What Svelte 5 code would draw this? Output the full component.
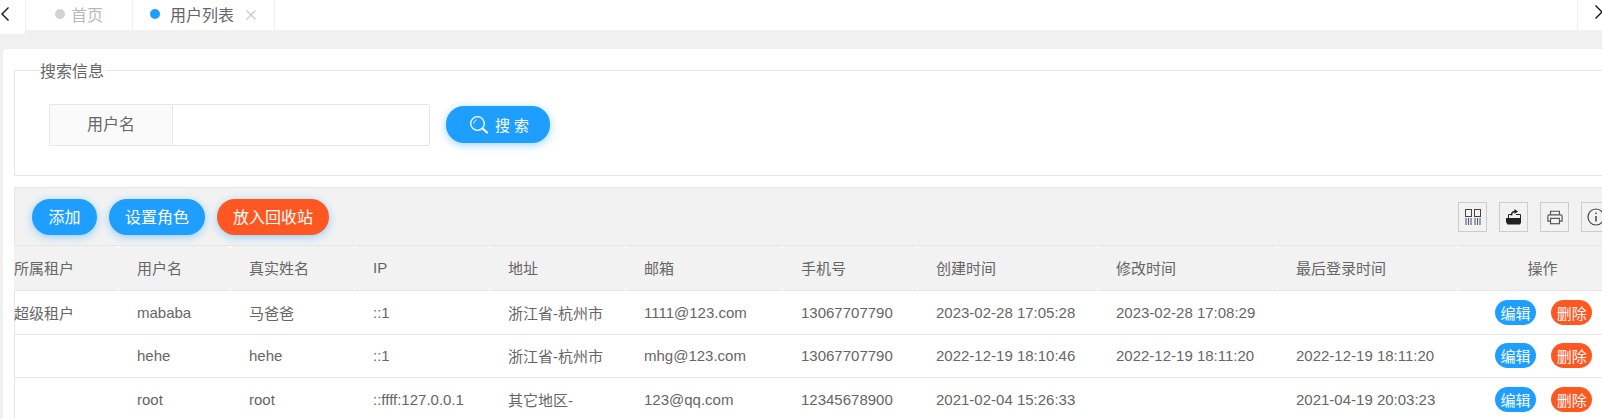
<script>
  const columns = [
    { title: "所属租户", width: 106 },
    { title: "用户名", width: 112 },
    { title: "真实姓名", width: 124 },
    { title: "IP", width: 135 },
    { title: "地址", width: 136 },
    { title: "邮箱", width: 157 },
    { title: "手机号", width: 135 },
    { title: "创建时间", width: 180 },
    { title: "修改时间", width: 180 },
    { title: "最后登录时间", width: 180 },
  ];

  const rows = [
    ["超级租户", "mababa", "马爸爸", "::1", "浙江省-杭州市", "1111@123.com", "13067707790", "2023-02-28 17:05:28", "2023-02-28 17:08:29", ""],
    ["", "hehe", "hehe", "::1", "浙江省-杭州市", "mhg@123.com", "13067707790", "2022-12-19 18:10:46", "2022-12-19 18:11:20", "2022-12-19 18:11:20"],
    ["", "root", "root", "::ffff:127.0.0.1", "其它地区-", "123@qq.com", "12345678900", "2021-02-04 15:26:33", "", "2021-04-19 20:03:23"],
  ];
</script>

<div class="page">
  <div class="tabs">
    <button class="arrow" aria-label="向左">
      <svg width="10" height="16" viewBox="0 0 10 16"><path d="M8.5 1.5 2 8l6.5 6.5" fill="none" stroke="#111" stroke-width="1.4" /></svg>
    </button>
    <div class="tab first"><i class="dot"></i>首页</div>
    <div class="tab second">
      <i class="dot on"></i><span class="cur">用户列表</span>
      <svg class="close" width="10" height="10" viewBox="0 0 10 10"><path d="M.5.5l9 9M9.5.5l-9 9" stroke="#c8c8c8" stroke-width="1.1" /></svg>
    </div>
    <div class="spacer"></div>
    <button class="arrow right" aria-label="向右">
      <svg width="10" height="16" viewBox="0 0 10 16"><path d="M1.5 1.5 8 8l-6.5 6.5" fill="none" stroke="#111" stroke-width="1.4" /></svg>
    </button>
  </div>

  <div class="card">
    <fieldset>
      <legend>搜索信息</legend>
      <div class="search">
        <div class="label">用户名</div>
        <input type="text" />
        <button class="btn big">
          <svg width="20" height="20" viewBox="0 0 20 20" fill="none" stroke="#fff">
            <circle cx="8.5" cy="8.5" r="6.8" stroke-width="1.3" />
            <path d="M5 8.5c0-2 1-3.200 2.500-3.500" stroke-width="1" />
            <path d="M13.500 13.500l4.500 4" stroke-width="2.200" stroke-linecap="round" />
          </svg>
          <span>搜 索</span>
        </button>
      </div>
    </fieldset>

    <div class="panel">
      <div class="toolbar">
        <button class="btn wide">添加</button>
        <button class="btn">设置角色</button>
        <button class="btn danger">放入回收站</button>
        <div class="tools">
          <div class="tool">
            <svg width="16" height="16" viewBox="0 0 16 16" fill="none">
              <rect x=".5" y=".5" width="6" height="7" stroke="#444" />
              <rect x="9.500" y=".5" width="6" height="7" stroke="#444" />
              <path d="M1 9v7M3.500 9v7M6 9v7M10 9v7M12.500 9v7M15 9v7" stroke="#4f6078" stroke-width="1.100" />
            </svg>
          </div>
          <div class="tool">
            <svg width="16" height="16" viewBox="0 0 16 16">
              <path d="M0 9h15v4.500l-1 2H1.500L0 13z" fill="#222" />
              <path d="M2.500 9V5.500H5M10 5.500h4.500V9" fill="none" stroke="#222" />
              <path d="M5.500 6.500c0-2.500 1.500-4 3.500-4" fill="none" stroke="#222" stroke-width="1.500" />
              <path d="M8.500 0l3.500 2.500-3.500 2.500z" fill="#222" />
            </svg>
          </div>
          <div class="tool">
            <svg width="16" height="15" viewBox="0 0 18 16" fill="none" stroke="#555" stroke-width="1.300">
              <path d="M4 5V1h10v4" />
              <path d="M4 12H1V6.500C1 5.500 1.500 5 2.500 5h13c1 0 1.500.5 1.500 1.500V12h-3" />
              <rect x="4" y="9" width="10" height="6" />
            </svg>
          </div>
          <div class="tool">
            <svg width="18" height="18" viewBox="0 0 18 18" fill="none" stroke="#444">
              <circle cx="9" cy="9" r="8" stroke-width="1.200" />
              <path d="M9 8v5.500M9 4.500v1.500" stroke-width="1.500" />
            </svg>
          </div>
        </div>
      </div>

      <table>
        <colgroup>
          {#each columns as c}
            <col style="width: {c.width}px" />
          {/each}
          <col style="width: 143px" />
        </colgroup>
        <thead>
          <tr>
            {#each columns as c}
              <th>{c.title}</th>
            {/each}
            <th class="center">操作</th>
          </tr>
        </thead>
        <tbody>
          {#each rows as row}
            <tr>
              {#each row as cell}
                <td>{cell}</td>
              {/each}
              <td class="ops">
                <button class="mini">编辑</button>
                <button class="mini danger">删除</button>
              </td>
            </tr>
          {/each}
        </tbody>
      </table>
    </div>
  </div>
</div>

<style>
  :global(body) {
    font-family: "Liberation Sans", "Noto Sans CJK SC", sans-serif;
    background: #f0f0f0;
    overflow: hidden;
  }

  .page {
    width: 1602px;
    height: 419px;
    overflow: hidden;
    color: #666;
    font-size: 15px;
  }

  .tabs {
    display: flex;
    height: 30px;
    background: #fff;
  }

  .arrow {
    width: 25px;
    height: 30px;
    padding: 0 0 4px;
    border: none;
    border-right: 1px solid #f0f0f0;
    background: #fff;
    text-align: left;
    box-sizing: content-box;
  }

  .arrow.right {
    border-right: none;
    border-left: 1px solid #f0f0f0;
    padding-left: 16px;
    box-sizing: border-box;
    width: 25px;
  }

  .tab {
    display: flex;
    align-items: center;
    height: 30px;
    box-sizing: border-box;
    border-right: 1px solid #f0f0f0;
    color: #b9b9b9;
    font-size: 16px;
    padding-bottom: 3px;
  }

  .tab.first {
    width: 107px;
    padding-left: 29px;
  }

  .tab.second {
    width: 142px;
    padding-left: 17px;
  }

  .cur {
    color: #666;
  }

  .dot {
    width: 10px;
    height: 10px;
    border-radius: 50%;
    background: #d2d2d2;
    margin-right: 6px;
  }

  .dot.on {
    background: #1e9fff;
    margin-right: 10px;
  }

  .close {
    margin-left: 12px;
    margin-top: 3px;
  }

  .spacer {
    flex: 1;
  }

  .card {
    width: 1700px;
    height: 400px;
    margin: 19px 0 0 3px;
    padding: 21px 0 0 11px;
    box-sizing: border-box;
    background: #fff;
    border-radius: 4px;
  }

  fieldset {
    width: 1650px;
    height: 106px;
    margin: 0;
    padding: 0 0 0 34px;
    box-sizing: border-box;
    border: 1px solid #e6e6e6;
    position: relative;
  }

  legend {
    position: absolute;
    top: -9px;
    left: 25px;
    padding: 0;
    background: #fff;
    color: #666;
    font-size: 16px;
    line-height: 20px;
    padding-right: 2px;
  }

  .search {
    display: flex;
    align-items: center;
    margin-top: 33px;
  }

  .label {
    width: 123px;
    height: 42px;
    box-sizing: border-box;
    border: 1px solid #e6e6e6;
    border-right-width: 0;
    border-radius: 2px 0 0 2px;
    background: #fafafa;
    font-size: 16px;
    line-height: 40px;
    text-align: center;
  }

  input {
    width: 258px;
    height: 42px;
    box-sizing: border-box;
    border: 1px solid #e6e6e6;
    border-radius: 0 2px 2px 0;
    outline: none;
  }

  .btn {
    height: 36px;
    padding: 0 16px 2px;
    border: none;
    border-radius: 18px;
    background: #1e9fff;
    color: #fff;
    font: inherit;
    font-size: 16px;
    box-shadow: 0 2px 8px rgba(30, 159, 255, 0.45);
    margin-right: 12px;
  }

  .btn.wide {
    padding: 0 16.5px 2px;
  }

  .btn.big {
    display: flex;
    align-items: center;
    justify-content: center;
    gap: 6px;
    width: 104px;
    height: 37px;
    margin: -1px 0 0 16px;
    padding: 0 0 0 2px;
    font-size: 15px;
  }

  .btn.danger {
    background: #ff5722;
  }

  .panel {
    width: 1650px;
    margin-top: 11px;
    border: 1px solid #e6e6e6;
    border-bottom: none;
  }

  .toolbar {
    display: flex;
    align-items: center;
    height: 58px;
    padding: 0 0 0 17px;
    box-sizing: border-box;
    background: #f2f2f2;
    border-bottom: 1px solid #e6e6e6;
  }

  .tools {
    display: flex;
    gap: 12px;
    position: absolute;
    left: 1458px;
    top: 202px;
  }

  .tool {
    display: flex;
    align-items: center;
    justify-content: center;
    width: 29px;
    height: 30px;
    box-sizing: border-box;
    border: 1px solid #ccc;
  }

  table {
    width: 1465px;
    margin-left: -1px;
    table-layout: fixed;
    border-collapse: collapse;
  }

  th,
  td {
    padding: 0 0 0 17px;
    height: 44px;
    box-sizing: border-box;
    border-bottom: 1px solid #e6e6e6;
    text-align: left;
    font-weight: 400;
    white-space: nowrap;
    overflow: hidden;
    color: #666;
  }

  tr:nth-child(2) td {
    height: 43px;
  }

  th:first-child,
  td:first-child {
    padding-left: 0;
  }

  th {
    background: #f2f2f2;
    position: relative;
  }

  th:not(:last-child)::after {
    content: "";
    position: absolute;
    right: 0;
    top: 0;
    width: 3px;
    height: 3px;
    background: #fff;
    clip-path: polygon(0 0, 100% 0, 50% 100%);
  }

  th:not(:last-child)::before {
    content: "";
    position: absolute;
    right: 0;
    bottom: 0;
    width: 3px;
    height: 2px;
    background: #fff;
    clip-path: polygon(50% 0, 100% 100%, 0 100%);
  }

  th.center {
    text-align: center;
    padding: 0 0 0 24px;
  }

  .ops {
    padding-left: 36px;
  }

  .mini {
    width: 41px;
    height: 25px;
    padding: 0;
    border: none;
    border-radius: 13px;
    background: #1e9fff;
    color: #fff;
    font: inherit;
    font-size: 15px;
  }

  .mini.danger {
    background: #ff5722;
    margin-left: 11px;
  }
</style>
